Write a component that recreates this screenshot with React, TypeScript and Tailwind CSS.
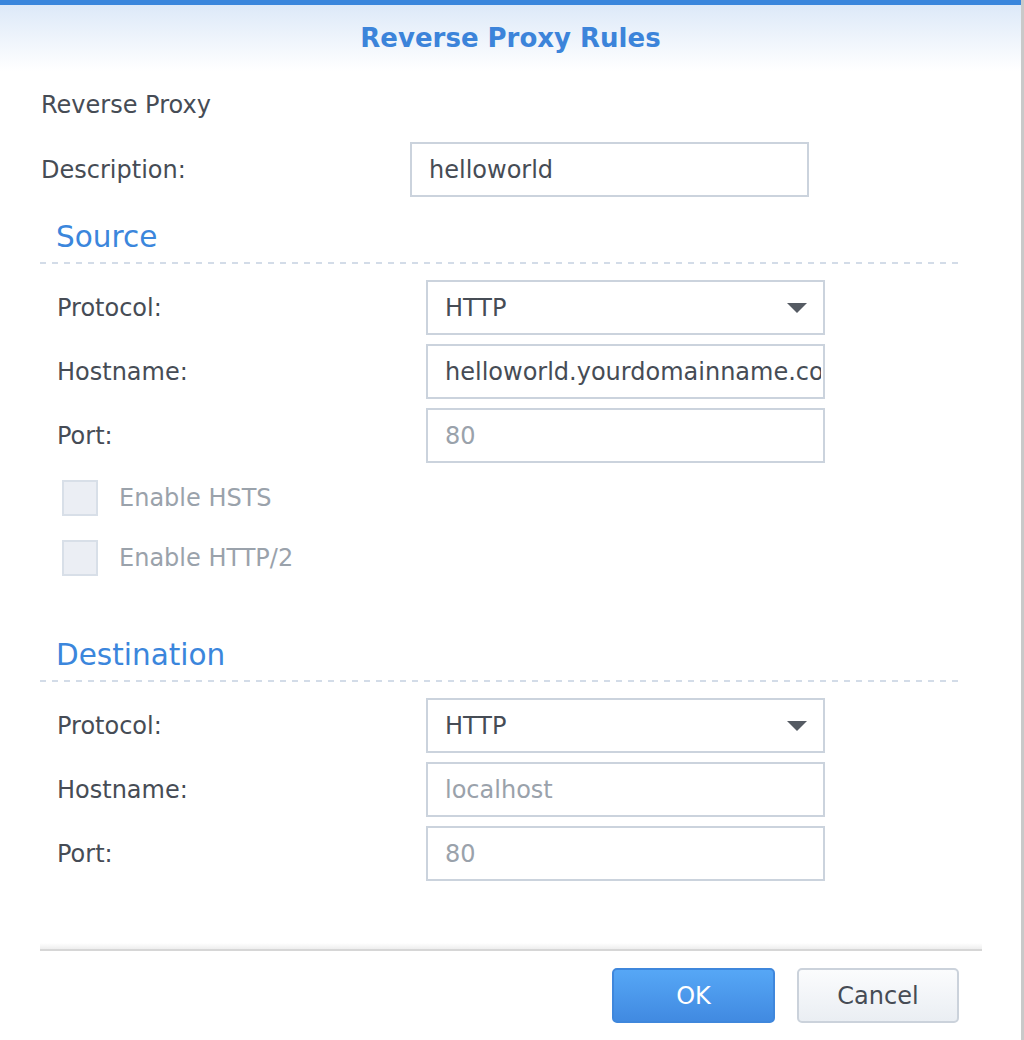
import React from "react";

const font = { fontFamily: '"DejaVu Sans", Verdana, sans-serif' };

function Field({
  label,
  value,
  muted,
  select,
}: {
  label: string;
  value: string;
  muted?: boolean;
  select?: boolean;
}) {
  return (
    <div className="flex items-center h-[55px]">
      <span className="w-[369px] text-[24px] text-[#464c55]">{label}</span>
      <div
        className={
          "w-[399px] h-[55px] border-2 border-[#cbd3dd] bg-white flex items-center pl-[17px] overflow-hidden " +
          (select ? "pr-[16px]" : "pr-[2px]")
        }
      >
        <span
          className={
            "flex-1 whitespace-nowrap overflow-hidden text-[24px] " +
            (muted ? "text-[#9aa2ab]" : "text-[#464c55]")
          }
        >
          {value}
        </span>
        {select && (
          <svg width="20" height="10" viewBox="0 0 20 10" className="ml-2">
            <path d="M0 0 L20 0 L10 10 Z" fill="#555b63" />
          </svg>
        )}
      </div>
    </div>
  );
}

function Check({ label }: { label: string }) {
  return (
    <div className="flex items-center h-[36px] ml-[5px]">
      <div className="w-[36px] h-[36px] bg-[#ebeef4] border-2 border-[#d8dfe8]" />
      <span className="ml-[21px] text-[24px] text-[#9aa2ab]">{label}</span>
    </div>
  );
}

function Dashed() {
  return (
    <div className="w-[922px] -ml-[1px] h-[2px] bg-[repeating-linear-gradient(90deg,#d3dce8_0_6px,transparent_6px_12px)]" />
  );
}

export default function App() {
  return (
    <div className="w-[1024px] h-[1040px] bg-white flex" style={font}>
      <div className="w-[1024px] h-full flex flex-col border-r-[3px] border-[#c9c9c9]">
        <div className="h-[5px] bg-[#3a86dc]" />
        <div className="h-[66px] bg-gradient-to-b from-[#dde9f8] to-white flex items-center justify-center">
          <span className="text-[26px] font-bold text-[#3c84da] mt-[1px]">
            Reverse Proxy Rules
          </span>
        </div>

        <div className="pl-[41px] flex flex-col">
          <div className="mt-[19px] h-[30px] flex items-center text-[24px] text-[#464c55]">
            Reverse Proxy
          </div>

          <div className="mt-[22px] flex items-center h-[55px]">
            <span className="w-[369px] text-[24px] text-[#464c55]">
              Description:
            </span>
            <div className="w-[399px] h-[55px] border-2 border-[#cbd3dd] flex items-center pl-[17px] text-[24px] text-[#464c55]">
              helloworld
            </div>
          </div>

          <div className="mt-[23px] ml-[15px] h-[34px] flex items-center text-[29.5px] text-[#3b86dc]">
            Source
          </div>
          <div className="mt-[8px]">
            <Dashed />
          </div>

          <div className="mt-[16px] ml-[16px] flex flex-col gap-[9px]">
            <Field label="Protocol:" value="HTTP" select />
            <Field label="Hostname:" value="helloworld.yourdomainname.com" />
            <Field label="Port:" value="80" muted />
          </div>

          <div className="mt-[17px] ml-[16px] flex flex-col gap-[24px]">
            <Check label="Enable HSTS" />
            <Check label="Enable HTTP/2" />
          </div>

          <div className="mt-[62px] ml-[15px] h-[34px] flex items-center text-[29.5px] text-[#3b86dc]">
            Destination
          </div>
          <div className="mt-[8px]">
            <Dashed />
          </div>

          <div className="mt-[16px] ml-[16px] flex flex-col gap-[9px]">
            <Field label="Protocol:" value="HTTP" select />
            <Field label="Hostname:" value="localhost" muted />
            <Field label="Port:" value="80" muted />
          </div>
        </div>

        <div className="mt-[62px] ml-[40px] w-[942px] h-[6px] bg-gradient-to-b from-white to-[#eeeeee]" />
        <div className="ml-[40px] w-[942px] h-[2px] bg-[#d6d6d6]" />

        <div className="mt-[17px] flex justify-end gap-[22px] pr-[62px]">
          <button className="w-[163px] h-[55px] rounded-[5px] border-2 border-[#3f87dc] bg-gradient-to-b from-[#56a7f6] to-[#418ae1] text-[24px] text-white">
            OK
          </button>
          <button className="w-[162px] h-[55px] rounded-[5px] border-2 border-[#cbd2db] bg-gradient-to-b from-[#fbfcfd] to-[#eaeef3] text-[24px] text-[#464c55]">
            Cancel
          </button>
        </div>
      </div>
    </div>
  );
}
